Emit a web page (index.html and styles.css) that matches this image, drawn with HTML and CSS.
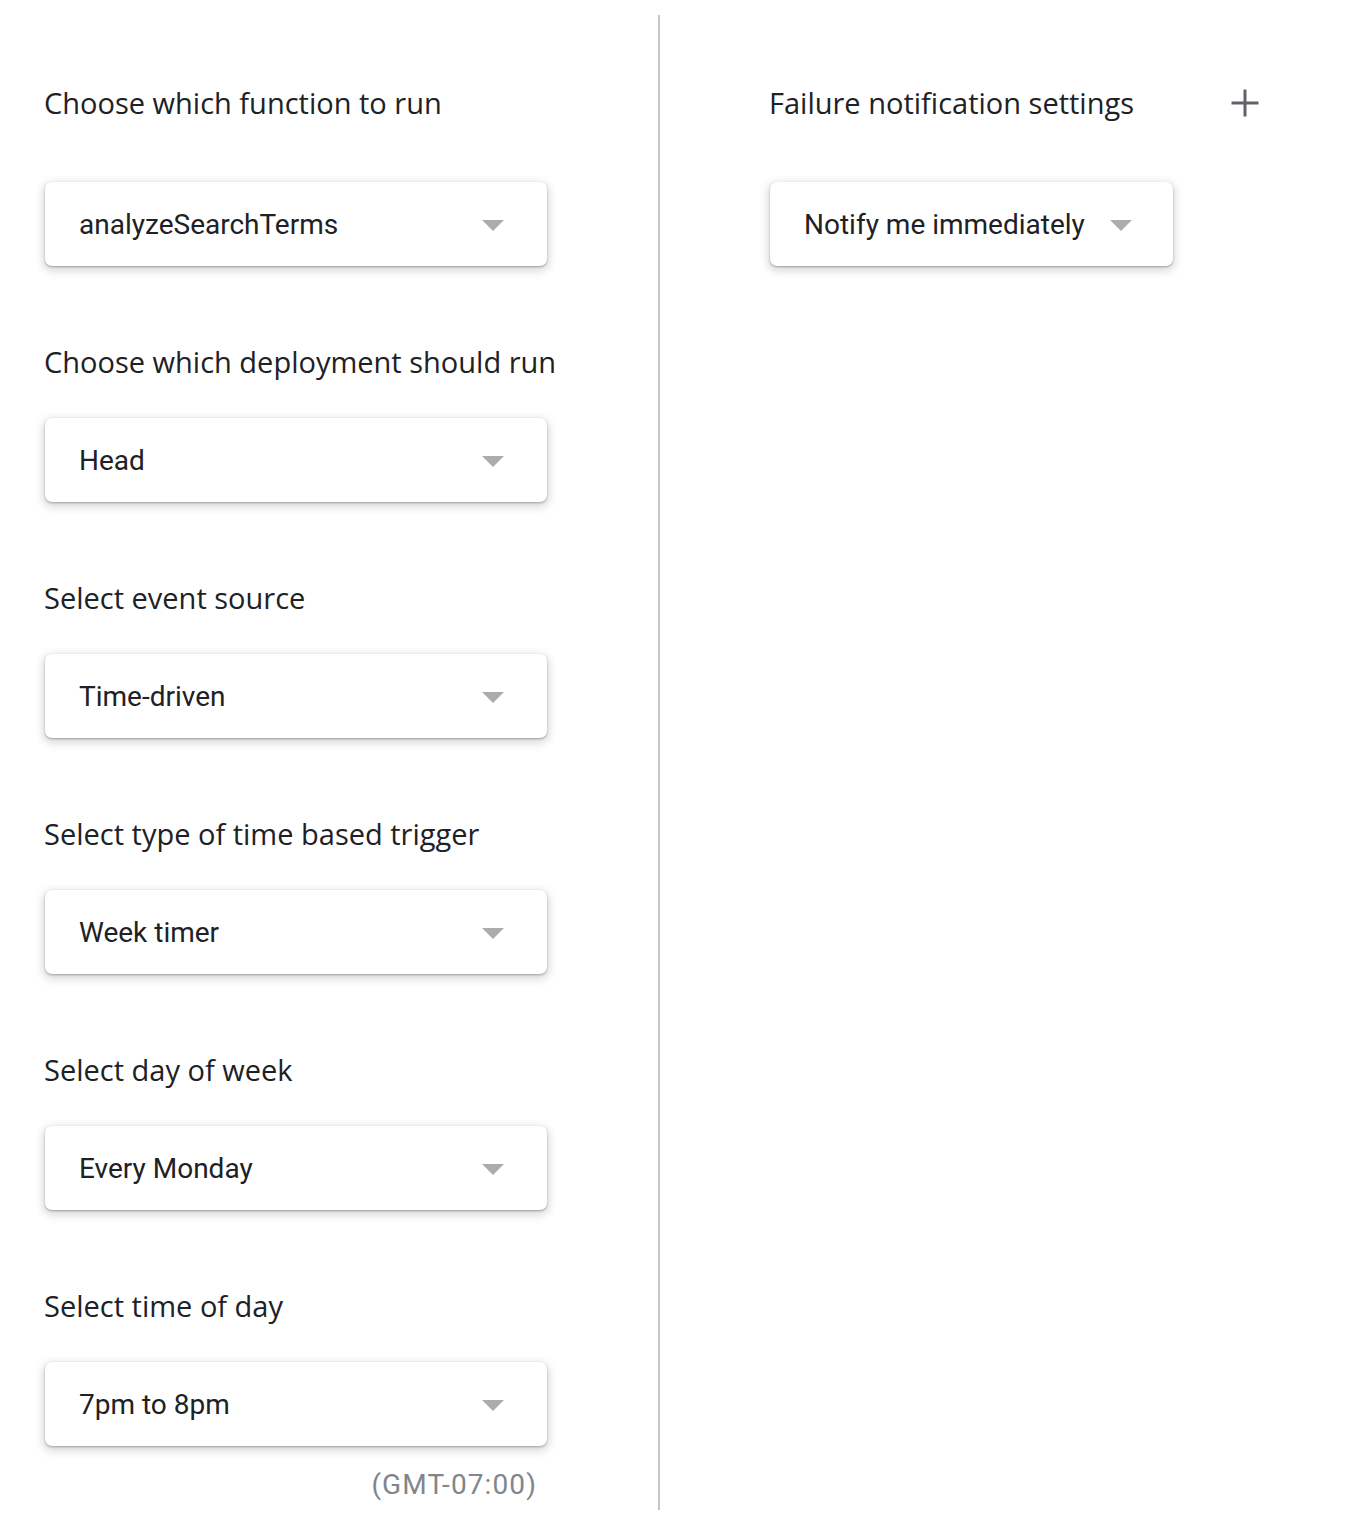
FILE: index.html
```html
<!DOCTYPE html>
<html lang="en">
<head>
<meta charset="utf-8">
<title>Trigger settings</title>
<link rel="stylesheet" href="styles.css">
</head>
<body>
<div class="page">
  <div class="col-left">
    <div class="field field-first">
      <div class="label">Choose which function to run</div>
      <div class="select select-wide"><span class="value">analyzeSearchTerms</span><span class="arrow"></span></div>
    </div>
    <div class="field">
      <div class="label">Choose which deployment should run</div>
      <div class="select select-wide"><span class="value">Head</span><span class="arrow"></span></div>
    </div>
    <div class="field">
      <div class="label">Select event source</div>
      <div class="select select-wide"><span class="value">Time-driven</span><span class="arrow"></span></div>
    </div>
    <div class="field">
      <div class="label">Select type of time based trigger</div>
      <div class="select select-wide"><span class="value">Week timer</span><span class="arrow"></span></div>
    </div>
    <div class="field">
      <div class="label">Select day of week</div>
      <div class="select select-wide"><span class="value">Every Monday</span><span class="arrow"></span></div>
    </div>
    <div class="field">
      <div class="label">Select time of day</div>
      <div class="select select-wide"><span class="value">7pm to 8pm</span><span class="arrow"></span></div>
      <div class="tz">(GMT-07:00)</div>
    </div>
  </div>
  <div class="divider"></div>
  <div class="col-right">
    <div class="field field-first">
      <div class="label-row">
        <div class="label">Failure notification settings</div>
        <svg class="plus" viewBox="0 0 30 30" width="30" height="30" aria-hidden="true"><path d="M15 1.5v27M1.5 15h27" stroke="#5f6368" stroke-width="3" fill="none"/></svg>
      </div>
      <div class="select select-auto"><span class="value">Notify me immediately</span><span class="arrow"></span></div>
    </div>
  </div>
</div>
</body>
</html>
```
FILE: styles.css
```css
html, body {
  margin: 0;
  padding: 0;
  background: #ffffff;
}
body {
  font-family: "Open Sans", "Liberation Sans", sans-serif;
  color: #202124;
}
.page {
  display: flex;
  align-items: stretch;
  padding-top: 15px;
  width: 1366px;
  box-sizing: border-box;
}
.col-left {
  width: 658px;
  box-sizing: border-box;
  padding: 68px 0 5px 44px;
  display: flex;
  flex-direction: column;
}
.divider {
  width: 2px;
  background: #c4c7ca;
}
.col-right {
  flex: 1;
  padding: 68px 0 0 109px;
}
.field {
  display: flex;
  flex-direction: column;
  align-items: flex-start;
  margin-top: 76px;
}
.field-first {
  margin-top: 0;
}
.label {
  font-family: "Open Sans", "Liberation Sans", sans-serif;
  font-size: 29px;
  line-height: 40px;
  height: 40px;
  color: #202124;
  white-space: nowrap;
}
.field .select {
  margin-top: 36px;
}
.field-first .select {
  margin-top: 59px;
}
.label-row {
  display: flex;
  align-items: center;
  justify-content: space-between;
  width: 491px;
}
.plus {
  display: block;
}
.select {
  display: flex;
  align-items: center;
  height: 84px;
  box-sizing: border-box;
  background: #fff;
  border-radius: 7px;
  box-shadow: 0 1px 2px rgba(60, 64, 67, 0.4), 0 3px 8px 2px rgba(60, 64, 67, 0.2);
  padding-left: 34px;
  margin-left: 1px;
}
.select-wide {
  width: 502px;
  justify-content: space-between;
  padding-right: 43px;
}
.select-auto {
  padding-right: 41px;
  gap: 25px;
}
.value {
  font-family: Roboto, "Liberation Sans", sans-serif;
  font-size: 28px;
  color: #202124;
  white-space: nowrap;
}
.arrow {
  width: 0;
  height: 0;
  border-left: 11px solid transparent;
  border-right: 11px solid transparent;
  border-top: 11px solid #acacac;
  margin-top: 2px;
}
.tz {
  align-self: flex-start;
  width: 493px;
  text-align: right;
  margin-top: 19px;
  font-family: Roboto, "Liberation Sans", sans-serif;
  font-size: 28px;
  letter-spacing: 1.1px;
  line-height: 40px;
  color: #80868b;
}
```
